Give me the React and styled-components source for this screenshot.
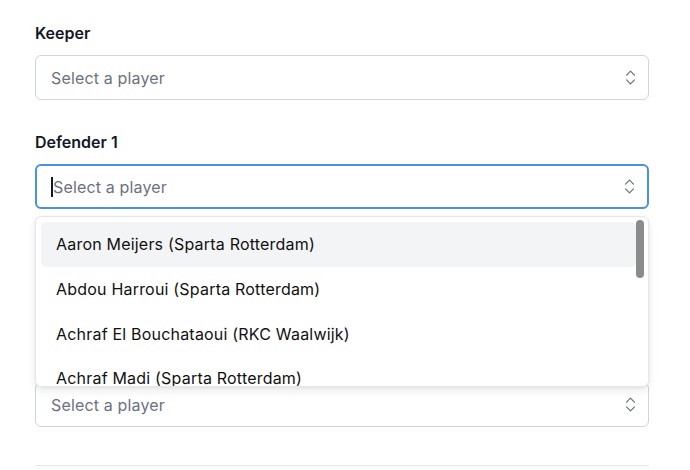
import styled, { createGlobalStyle } from "styled-components";
import { ChevronsUpDown } from "lucide-react";

const GlobalStyle = createGlobalStyle`
  body {
    margin: 0;
    background: #ffffff;
    font-family: Inter, "Noto Sans", sans-serif;
    -webkit-font-smoothing: antialiased;
  }
`;

const Page = styled.div`
  width: 614px;
  padding: 21px 0 0 35px;
  display: flex;
  flex-direction: column;
  gap: 30px;
`;

const Field = styled.div`
  position: relative;
  z-index: ${(p) => (p.$open ? 5 : "auto")};
  display: flex;
  flex-direction: column;
  gap: 10px;
`;

const Label = styled.div`
  font-size: 16px;
  line-height: 24px;
  font-weight: 600;
  color: #111827;
`;

const SelectBox = styled.div`
  box-sizing: border-box;
  height: 45px;
  display: flex;
  align-items: center;
  justify-content: space-between;
  padding: 0 8px 0 ${(p) => (p.$focused ? "14px" : "15px")};
  border: ${(p) => (p.$focused ? "2px solid #4a8fe9" : "1px solid #d1d5db")};
  border-radius: 6px;
  background: #fff;
  color: #6b7280;
  font-size: 16px;
  letter-spacing: 0.15px;
`;

const Placeholder = styled.span`
  display: flex;
  align-items: center;
`;

const Caret = styled.span`
  display: inline-block;
  width: 1.5px;
  height: 20px;
  background: #111827;
  margin-right: 0.5px;
`;

const Menu = styled.div`
  position: absolute;
  left: 0;
  right: 0;
  top: 86px;
  height: 171px;
  box-sizing: border-box;
  border: 1px solid #e5e7eb;
  border-radius: 6px;
  background: #fff;
  box-shadow: 0 4px 10px rgba(0, 0, 0, 0.08), 0 1px 3px rgba(0, 0, 0, 0.06);
  overflow: hidden;
`;

const List = styled.div`
  padding: 5px 12px 5px 5px;
  display: flex;
  flex-direction: column;
`;

const Option = styled.div`
  height: 44.7px;
  display: flex;
  align-items: center;
  padding-left: 15px;
  border-radius: 5px;
  font-size: 16px;
  letter-spacing: 0.2px;
  color: #111111;
  background: ${(p) => (p.$active ? "#f3f4f6" : "transparent")};
`;

const Thumb = styled.div`
  position: absolute;
  top: 3px;
  right: 4px;
  width: 8px;
  height: 58px;
  border-radius: 4px;
  background: #8b8b8b;
`;

const Divider = styled.hr`
  margin: 8px 0 0;
  border: none;
  border-top: 1px solid #e5e7eb;
`;

const players = [
  "Aaron Meijers (Sparta Rotterdam)",
  "Abdou Harroui (Sparta Rotterdam)",
  "Achraf El Bouchataoui (RKC Waalwijk)",
  "Achraf Madi (Sparta Rotterdam)",
];

const Select = ({ focused }) => (
  <SelectBox $focused={focused}>
    <Placeholder>
      {focused && <Caret />}
      Select a player
    </Placeholder>
    <ChevronsUpDown size={19} strokeWidth={1.6} color="#6b7280" />
  </SelectBox>
);

export default function App() {
  return (
    <>
      <GlobalStyle />
      <Page>
        <Field>
          <Label>Keeper</Label>
          <Select />
        </Field>
        <Field $open>
          <Label>Defender 1</Label>
          <Select focused />
          <Menu>
            <List>
              {players.map((p, i) => (
                <Option key={p} $active={i === 0}>
                  {p}
                </Option>
              ))}
            </List>
            <Thumb />
          </Menu>
        </Field>
        <Field>
          <Label>Defender 2</Label>
          <Select />
        </Field>
        <Field>
          <Label>Defender 3</Label>
          <Select />
        </Field>
        <Divider />
      </Page>
    </>
  );
}
